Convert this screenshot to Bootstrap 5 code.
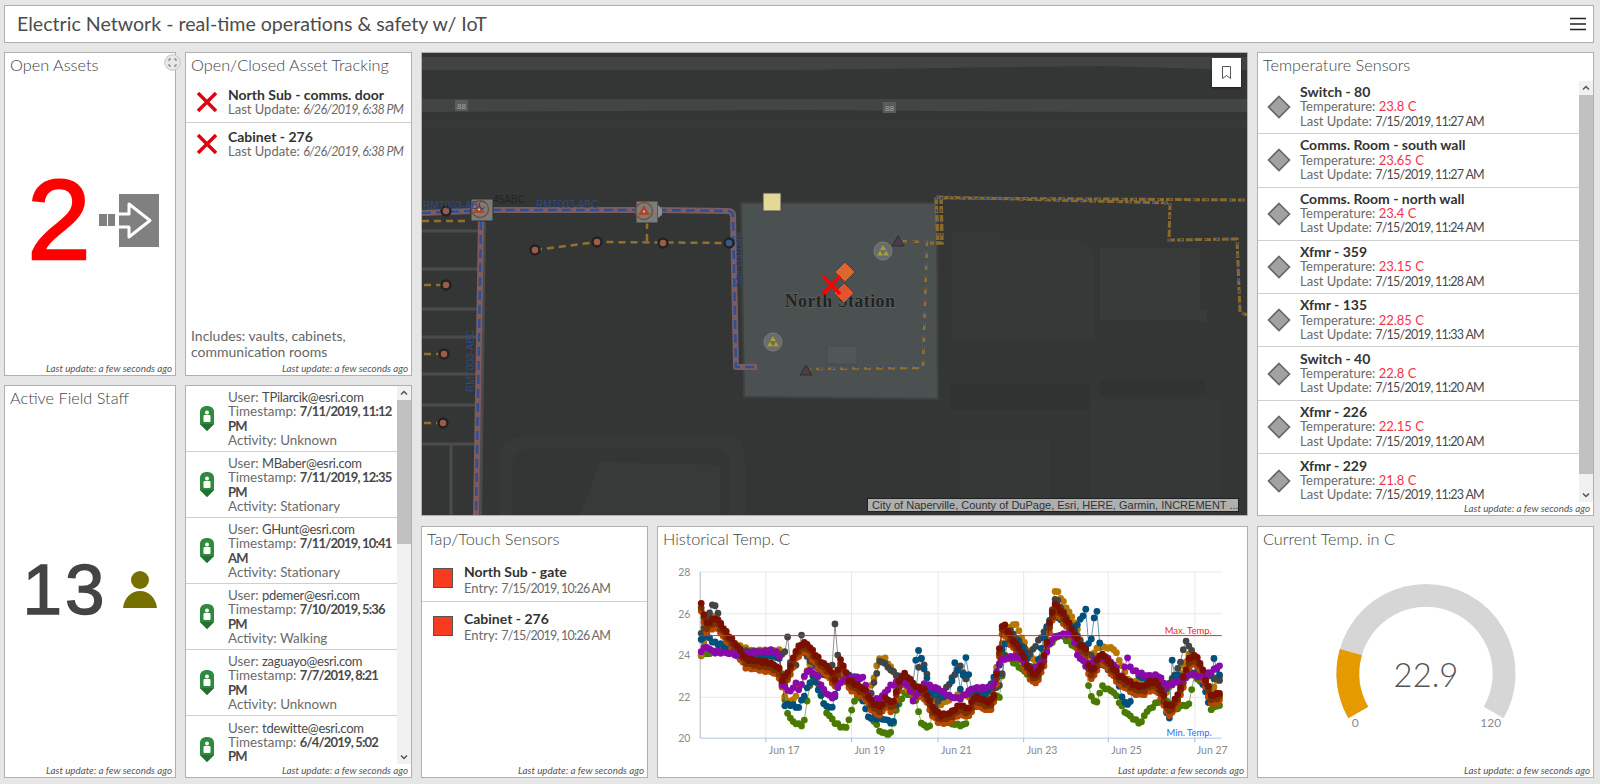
<!DOCTYPE html>
<html lang="en">

<head>
    <meta charset="UTF-8">
    <title>Electric Network - real-time operations &amp; safety w/ IoT</title>
    <link href="https://cdn.jsdelivr.net/npm/bootstrap@5.3.1/dist/css/bootstrap.min.css" rel="stylesheet">
    <style>
        html,
        body {
            height: 100%;
            overflow: hidden;
        }

        body {
            background: #e6e6e6;
            color: #4c4c4c;
            font-family: Lato, "Liberation Sans", sans-serif;
        }

        .dash-wrap {
            padding: 5px 6px 0 4px;
            gap: 9px;
        }

        .dash-head {
            height: 38px;
            padding: 0 7px 0 12px;
        }

        .dash-title {
            font-size: 19.6px;
            font-weight: 400;
        }

        .dash-main {
            height: 726px;
            gap: 9px;
        }

        .col-assets {
            width: 408px;
            gap: 9px;
        }

        .col-map {
            width: 827px;
            gap: 10px;
        }

        .col-temp {
            width: 337px;
            gap: 10px;
        }

        .row-top {
            height: 324px;
            gap: 9px;
        }

        .row-bottom {
            height: 393px;
            gap: 9px;
        }

        .row-tap {
            height: 252px;
            gap: 9px;
        }

        .w-narrow {
            width: 172px;
        }

        .w-list {
            width: 227px;
        }

        .panel-top {
            height: 464px;
        }

        .panel-gauge {
            height: 252px;
        }

        .card.dash-panel {
            --bs-card-border-color: #b0b0b0;
            --bs-card-border-radius: 0;
            --bs-card-inner-border-radius: 0;
            --bs-card-color: #4c4c4c;
            min-height: 0;
        }

        .panel-name {
            height: 28px;
            line-height: 24px;
            padding-left: 5px;
            font-size: 16.3px;
            font-weight: 300;
            color: #444;
            flex: none;
            white-space: nowrap;
        }

        .panel-foot {
            height: 13px;
            line-height: 12px;
            padding-right: 3px;
            font-size: 9.8px;
            font-style: italic;
            text-align: right;
            color: #555;
            flex: none;
        }

        .expand-btn {
            position: absolute;
            top: -4px;
            right: -6px;
            width: 17px;
            height: 17px;
            z-index: 2;
        }

        .assets-body {
            padding: 0 0 3px 6px;
        }

        .big-two {
            font-family: "Liberation Sans", sans-serif;
            font-size: 114px;
            line-height: 1;
            color: #f00;
            -webkit-text-stroke: 2.5px #f00;
        }

        .big-count {
            font-family: "Liberation Sans", sans-serif;
            font-size: 71px;
            line-height: 1;
            letter-spacing: 3px;
            color: #444;
            -webkit-text-stroke: 1.5px #444;
        }

        .asset-list,
        .sensor-list,
        .staff-list,
        .tap-list {
            --bs-list-group-border-color: #cfcfcf;
            --bs-list-group-bg: #fff;
            --bs-list-group-border-radius: 0;
        }

        .list-group-item.row-item {
            padding: 0;
            color: #6a6a6a;
            border-bottom: 1px solid #cfcfcf;
            flex: none;
        }

        .asset-list .row-item {
            height: 42px;
            font-size: 13px;
            line-height: 15px;
        }

        .tap-list .row-item {
            height: 47px;
            font-size: 13px;
            line-height: 16px;
        }

        .tap-text {
            padding-top: 4px;
        }

        .sensor-list .row-item {
            height: 53.3px;
            font-size: 13px;
            line-height: 14.4px;
        }

        .staff-list .row-item {
            height: 66px;
            font-size: 13.4px;
            line-height: 14.2px;
        }

        .item-ico {
            width: 42px;
            flex: none;
        }

        .item-name {
            font-size: 14px;
            font-weight: 700;
            color: #333;
        }

        .item-val {
            color: #4a4a4a;
        }

        .date-val {
            font-size: 12.5px;
            letter-spacing: -.75px;
        }

        .asset-list .date-val {
            letter-spacing: -.6px;
        }

        .mail-val {
            color: #4a4a4a;
            font-size: 13px;
            letter-spacing: -.3px;
        }

        .item-strong {
            font-size: 13px;
            font-weight: 700;
            letter-spacing: -.8px;
            color: #4a4a4a;
        }

        .hot-val {
            color: #f5314b;
        }

        .note-text {
            padding: 0 5px 2px;
            font-size: 14px;
            line-height: 16px;
            color: #666;
        }

        .fake-bar {
            width: 14px;
            background: #f1f1f1;
            flex: none;
        }

        .bar-btn {
            height: 14px;
            flex: none;
        }

        .thumb-staff {
            height: 144px;
            background: #c1c1c1;
            flex: none;
        }

        .thumb-temp {
            height: 379px;
            background: #c1c1c1;
            flex: none;
        }

        .map-svg {
            display: block;
            background: #343635;
        }

        .map-keep {
            position: absolute;
            top: 5px;
            right: 6px;
            width: 29px;
            height: 29px;
            background: #fff;
            box-shadow: 0 1px 2px rgba(0, 0, 0, .5);
        }

        .map-credit {
            position: absolute;
            right: 8px;
            bottom: 3px;
            width: 372px;
            height: 14px;
            line-height: 13px;
            padding-left: 4px;
            background: #aeb0b0;
            border: 1px solid #222;
            color: #333;
            font-family: "Liberation Sans", sans-serif;
            font-size: 11px;
            white-space: nowrap;
            overflow: hidden;
        }

        .chart-svg {
            display: block;
            flex: 1 1 auto;
            min-height: 0;
        }

        .ax-label {
            font-family: Lato, sans-serif;
            font-size: 10.5px;
            fill: #8a8a8a;
        }
    </style>
</head>

<body>
    <svg width="0" height="0" class="position-absolute">
        <symbol id="ico-x" viewBox="0 0 20 20">
            <path d="M1 1 19 19M19 1 1 19" stroke="#e0000f" stroke-width="3.4" fill="none" />
        </symbol>
        <symbol id="ico-pin" viewBox="0 0 14 25">
            <path d="M7 0C11 0 14 2 14 6V18L7 25 0 18V6C0 2 3 0 7 0Z" fill="#2f8a3e" />
            <path d="M0 18H14L7 25Z" fill="#237032" />
            <circle cx="7" cy="6.5" r="2" fill="#fff" />
            <rect x="3.5" y="9" width="7" height="7" rx="1" fill="#fff" />
        </symbol>
        <symbol id="ico-diamond" viewBox="0 0 24 24">
            <path d="M12 1.5 22.5 12 12 22.5 1.5 12Z" fill="#a2a2a2" stroke="#666" stroke-width="1.6" />
        </symbol>
        <symbol id="ico-up" viewBox="0 0 14 14">
            <path d="M4 8.5 7 5.5 10 8.5" fill="none" stroke="#555" stroke-width="1.5" />
        </symbol>
        <symbol id="ico-down" viewBox="0 0 14 14">
            <path d="M4 5.5 7 8.5 10 5.5" fill="none" stroke="#555" stroke-width="1.5" />
        </symbol>
    </svg>

    <div class="dash-wrap d-flex flex-column">
        <header class="dash-head card dash-panel flex-row align-items-center justify-content-between">
            <h1 class="dash-title m-0">Electric Network - real-time operations &amp; safety w/ IoT</h1>
            <svg width="16" height="14" viewBox="0 0 16 14">
                <path d="M0 1.5H16M0 7H16M0 12.5H16" stroke="#222" stroke-width="1.7" />
            </svg>
        </header>

        <div class="dash-main d-flex">
            <!-- assets and staff -->
            <div class="col-assets d-flex flex-column">
                <div class="row-top d-flex">
                    <section class="w-narrow card dash-panel">
                        <div class="expand-btn">
                            <svg width="17" height="17" viewBox="0 0 17 17">
                                <circle cx="8.5" cy="8.5" r="7.8" fill="#e8e8e8" stroke="#c4c4c4" />
                                <path d="M5 7V5H7M10 5H12V7M12 10V12H10M7 12H5V10" fill="none" stroke="#777" />
                            </svg>
                        </div>
                        <div class="panel-name">Open Assets</div>
                        <div class="assets-body flex-grow-1 d-flex align-items-center justify-content-center gap-2">
                            <span class="big-two">2</span>
                            <svg width="60" height="53" viewBox="98 195 60 53">
                                <rect x="118" y="195" width="40" height="53" fill="#808080" />
                                <rect x="98" y="215" width="8" height="12" fill="#808080" />
                                <rect x="107" y="215" width="7" height="12" fill="#808080" />
                                <path d="M118 215H128V205L149 221.500 128 238V228H118" fill="#808080" stroke="#fff"
                                    stroke-width="3" stroke-linejoin="round" />
                            </svg>
                        </div>
                        <div class="panel-foot">Last update: a few seconds ago</div>
                    </section>

                    <section class="w-list card dash-panel">
                        <div class="panel-name">Open/Closed Asset Tracking</div>
                        <ul class="asset-list list-group list-group-flush border-0">
                            <li class="list-group-item row-item d-flex align-items-center">
                                <div class="item-ico d-flex justify-content-center">
                                    <svg width="20" height="20"><use href="#ico-x" /></svg>
                                </div>
                                <div>
                                    <div class="item-name">North Sub - comms. door</div>
                                    <div>Last Update: <em class="date-val">6/26/2019, 6:38 PM</em></div>
                                </div>
                            </li>
                            <li class="list-group-item row-item d-flex align-items-center">
                                <div class="item-ico d-flex justify-content-center">
                                    <svg width="20" height="20"><use href="#ico-x" /></svg>
                                </div>
                                <div>
                                    <div class="item-name">Cabinet - 276</div>
                                    <div>Last Update: <em class="date-val">6/26/2019, 6:38 PM</em></div>
                                </div>
                            </li>
                        </ul>
                        <div class="flex-grow-1"></div>
                        <div class="note-text">Includes: vaults, cabinets,<br>communication rooms</div>
                        <div class="panel-foot">Last update: a few seconds ago</div>
                    </section>
                </div>

                <div class="row-bottom d-flex">
                    <section class="w-narrow card dash-panel">
                        <div class="panel-name">Active Field Staff</div>
                        <div class="flex-grow-1 d-flex align-items-center justify-content-center gap-3">
                            <span class="big-count">13</span>
                            <svg width="34" height="37" viewBox="0 0 34 37">
                                <circle cx="17" cy="9" r="9" fill="#757000" />
                                <path d="M0 37C1 27 8 20 17 20S33 27 34 37Z" fill="#757000" />
                            </svg>
                        </div>
                        <div class="panel-foot">Last update: a few seconds ago</div>
                    </section>

                    <section class="w-list card dash-panel">
                        <div class="d-flex flex-grow-1 overflow-hidden">
                            <ul class="staff-list list-group list-group-flush flex-grow-1 overflow-hidden flex-nowrap">
                                <li class="list-group-item row-item d-flex align-items-center">
                                    <div class="item-ico d-flex justify-content-center">
                                        <svg width="14" height="25"><use href="#ico-pin" /></svg>
                                    </div>
                                    <div>User: <span class="mail-val">TPilarcik@esri.com</span><br>Timestamp: <span class="item-strong">7/11/2019, 11:12<br>PM</span><br>Activity: Unknown</div>
                                </li>
                                <li class="list-group-item row-item d-flex align-items-center">
                                    <div class="item-ico d-flex justify-content-center">
                                        <svg width="14" height="25"><use href="#ico-pin" /></svg>
                                    </div>
                                    <div>User: <span class="mail-val">MBaber@esri.com</span><br>Timestamp: <span class="item-strong">7/11/2019, 12:35<br>PM</span><br>Activity: Stationary</div>
                                </li>
                                <li class="list-group-item row-item d-flex align-items-center">
                                    <div class="item-ico d-flex justify-content-center">
                                        <svg width="14" height="25"><use href="#ico-pin" /></svg>
                                    </div>
                                    <div>User: <span class="mail-val">GHunt@esri.com</span><br>Timestamp: <span class="item-strong">7/11/2019, 10:41<br>AM</span><br>Activity: Stationary</div>
                                </li>
                                <li class="list-group-item row-item d-flex align-items-center">
                                    <div class="item-ico d-flex justify-content-center">
                                        <svg width="14" height="25"><use href="#ico-pin" /></svg>
                                    </div>
                                    <div>User: <span class="mail-val">pdemer@esri.com</span><br>Timestamp: <span class="item-strong">7/10/2019, 5:36<br>PM</span><br>Activity: Walking</div>
                                </li>
                                <li class="list-group-item row-item d-flex align-items-center">
                                    <div class="item-ico d-flex justify-content-center">
                                        <svg width="14" height="25"><use href="#ico-pin" /></svg>
                                    </div>
                                    <div>User: <span class="mail-val">zaguayo@esri.com</span><br>Timestamp: <span class="item-strong">7/7/2019, 8:21<br>PM</span><br>Activity: Unknown</div>
                                </li>
                                <li class="list-group-item row-item d-flex align-items-center">
                                    <div class="item-ico d-flex justify-content-center">
                                        <svg width="14" height="25"><use href="#ico-pin" /></svg>
                                    </div>
                                    <div>User: <span class="mail-val">tdewitte@esri.com</span><br>Timestamp: <span class="item-strong">6/4/2019, 5:02<br>PM</span><br>Activity: Unknown</div>
                                </li>
                            </ul>
                            <div class="fake-bar d-flex flex-column">
                                <svg class="bar-btn" width="14" height="14"><use href="#ico-up" /></svg>
                                <div class="thumb-staff"></div>
                                <div class="flex-grow-1"></div>
                                <svg class="bar-btn" width="14" height="14"><use href="#ico-down" /></svg>
                            </div>
                        </div>
                        <div class="panel-foot">Last update: a few seconds ago</div>
                    </section>
                </div>
            </div>

            <!-- map, tap sensors and history -->
            <div class="col-map d-flex flex-column">
                <section class="panel-top card dash-panel overflow-hidden">
                    <svg class="map-svg" width="825" height="462" viewBox="422 53 825 462">
                        <!-- highway bands -->
                        <path d="M422 57H1247V70L1100 66 800 70H422Z" fill="#424443" />
                        <path d="M422 99H1247V112H1100L800 110 422 112Z" fill="#434544" />
                        <path d="M422 120H1247V128H422Z" fill="#373938" />
                        <rect x="455" y="100" width="13" height="11" fill="#5a5c5b" />
                        <text x="461.500" y="108.500" text-anchor="middle" font-size="8" fill="#a5a5a5" font-family="Liberation Sans">88</text>
                        <rect x="883" y="102" width="13" height="11" fill="#5a5c5b" />
                        <text x="889.500" y="110.500" text-anchor="middle" font-size="8" fill="#a5a5a5" font-family="Liberation Sans">88</text>

                        <!-- buildings and lots -->
                        <path d="M952 232H1000V240H1080Q1095 245 1095 262V340H952Z" fill="#373938" />
                        <path d="M1100 248H1200V310H1207V322H1200V320H1100Z" fill="#393b3a" />
                        <path d="M600 462 720 465V516H580Z" fill="#383a39" />
                        <path d="M500 450Q505 437 530 437H735Q745 440 745 460V516H730V465Q730 448 715 448H530Q515 450 512 465V516H500Z" fill="#373938" />
                        <path d="M960 440H1050V516H960Z" fill="#363837" />
                        <path d="M1090 400H1220V516H1090Z" fill="#363837" />
                        <path d="M950 385H1090V410H950Z" fill="#313332" />
                        <path d="M1100 380H1205V395H1100Z" fill="#313332" />

                        <!-- side streets -->
                        <g stroke="#4a4b4a" stroke-width="3" fill="none">
                            <path d="M422 231H480M422 269H480M422 309H478M422 337H478M422 374H478M422 405H478M422 444H478" />
                            <path d="M451 444V515" />
                            <path d="M484 222 480 515" stroke-width="4" />
                        </g>

                        <!-- substation -->
                        <path d="M741 203H937L938 399 744 397Z" fill="#4b5150" stroke="#3d4140" stroke-width="2" />
                        <rect x="827" y="346" width="30" height="18" fill="#515756" stroke="#474c4b" />

                        <!-- primary line -->
                        <g fill="none" stroke-linejoin="round">
                            <path d="M422 213 470 211M492 210H636M658 210 728 211Q733 211 733 216L736 367H757M481 221 476 515" stroke="#7c5c5e" stroke-width="6" />
                            <path d="M422 213 470 211M492 210H636M658 210 728 211Q733 211 733 216L736 367H757M481 221 476 515" stroke="#2d4f96" stroke-width="2.500" stroke-dasharray="9 5" />
                        </g>

                        <!-- secondary lines -->
                        <g fill="none" stroke="#94702f" stroke-width="2.500" stroke-dasharray="7 5">
                            <path d="M422 221H470" />
                            <path d="M535 250 597 242 729 243" />
                            <path d="M647 222V242" />
                            <path d="M424 285H445M424 354H443M424 423H442" />
                            <path d="M900 241 927 242 923 366Q923 368 920 368L810 369" />
                        </g>
                        <g fill="none">
                            <g stroke="#8a6a2c" stroke-width="3.500" stroke-dasharray="7 2">
                                <path d="M936 197 938 243M941 197 942 243 930 243" />
                                <path d="M936 197 1170 203M941 198 1247 200" stroke-width="3" />
                                <path d="M1170 203 1169 240 1237 239 1240 312 1247 315" stroke-width="3" />
                            </g>
                            <g stroke="#2d4b80" stroke-width="1.500" stroke-dasharray="3 9">
                                <path d="M936 197 938 243M941 197 942 243" />
                                <path d="M936 197 1170 203M941 198 1247 200" />
                                <path d="M1170 203 1169 240 1237 239 1240 312 1247 315" />
                                <path d="M900 241 927 242 923 366 810 369" />
                            </g>
                        </g>

                        <!-- poles -->
                        <g stroke="#222" stroke-width="2.500" fill="#9c5c48">
                            <circle cx="446" cy="211" r="4.500" />
                            <circle cx="535" cy="250" r="4.500" />
                            <circle cx="597" cy="242" r="4.500" />
                            <circle cx="663" cy="243" r="4.500" />
                            <circle cx="729" cy="243" r="4.500" fill="#345a8c" />
                            <circle cx="446" cy="285" r="4.500" />
                            <circle cx="444" cy="354" r="4.500" />
                            <circle cx="443" cy="423" r="4.500" />
                        </g>

                        <!-- switch boxes -->
                        <g>
                            <rect x="471" y="199" width="22" height="22" fill="#7c7c7c" stroke="#333" />
                            <circle cx="480" cy="209" r="8.500" fill="none" stroke="#7a5230" stroke-width="1.500" />
                            <path d="M479 203 485 213H473Z" fill="#a8492e" />
                            <circle cx="479" cy="209.500" r="1" fill="#ddd" />
                            <rect x="636" y="201" width="22" height="22" fill="#7c7c7c" stroke="#333" />
                            <path d="M658 205 662 209V215L658 218Z" fill="#8d8d8d" />
                            <circle cx="644" cy="211" r="8.500" fill="none" stroke="#7a5230" stroke-width="1.500" />
                            <path d="M644 205 650 215H638Z" fill="#a8492e" />
                            <circle cx="644" cy="211.500" r="1" fill="#ddd" />
                        </g>

                        <!-- labels on the lines -->
                        <g font-family="Liberation Sans" font-size="10" fill="#2f4a80">
                            <text x="423" y="209">RMT003-ABC</text>
                            <text x="536" y="208">RMT003-ABC</text>
                            <text transform="translate(474 392) rotate(-90)">RMT003-ABC</text>
                            <text transform="translate(736 232) rotate(90)" font-size="9">RMT003-ABC</text>
                            <text x="493" y="203" fill="#222">45ABC</text>
                        </g>

                        <!-- station symbols -->
                        <text x="840" y="307" text-anchor="middle" font-family="Liberation Serif" font-weight="700"
                            font-size="18" letter-spacing=".4" fill="#222" stroke="#6a6e6d" stroke-width=".8"
                            paint-order="stroke">North Station</text>
                        <rect x="763" y="193" width="18" height="18" fill="#e3d898" stroke="#444" />
                        <g fill="#6a6c6b" stroke="#7c7c7c">
                            <circle cx="883" cy="251" r="9" />
                            <circle cx="773" cy="342" r="9" />
                        </g>
                        <g fill="#a8a030">
                            <path d="M883 245 886 250H880ZM880 250.500 883 255.500H877ZM886 250.500 889 255.500H883Z" />
                            <path d="M773 336 776 341H770ZM770 341.500 773 346.500H767ZM776 341.500 779 346.500H773Z" />
                        </g>
                        <path d="M898 236 904 246H892Z" fill="#4a3d48" stroke="#2e2e2e" />
                        <path d="M806 365 812 375H800Z" fill="#4a3d48" stroke="#2e2e2e" />
                        <path d="M845 262 855 272 845 282 835 272Z" fill="#e0652f" stroke="#444" />
                        <path d="M844 283 854 293 844 303 834 293Z" fill="#e0552f" stroke="#444" />
                        <path d="M823 276 840 294M840 276 823 294" stroke="#f00" stroke-width="3.500" />
                    </svg>
                    <div class="map-keep d-flex align-items-center justify-content-center">
                        <svg width="9" height="13" viewBox="0 0 9 13">
                            <path d="M.5.5H8.500V12.500L4.500 9.500.5 12.500Z" fill="none" stroke="#555" />
                        </svg>
                    </div>
                    <div class="map-credit">City of Naperville, County of DuPage, Esri, HERE, Garmin, INCREMENT ...</div>
                </section>

                <div class="row-tap d-flex">
                    <section class="w-list card dash-panel">
                        <div class="panel-name">Tap/Touch Sensors</div>
                        <ul class="tap-list list-group list-group-flush border-0">
                            <li class="list-group-item row-item d-flex align-items-center">
                                <div class="item-ico d-flex justify-content-center">
                                    <svg width="20" height="20"><rect x=".5" y=".5" width="19" height="19" fill="#f53c1e" stroke="#555" /></svg>
                                </div>
                                <div class="tap-text">
                                    <div class="item-name">North Sub - gate</div>
                                    <div>Entry: <span class="date-val">7/15/2019, 10:26 AM</span></div>
                                </div>
                            </li>
                            <li class="list-group-item row-item d-flex align-items-center">
                                <div class="item-ico d-flex justify-content-center">
                                    <svg width="20" height="20"><rect x=".5" y=".5" width="19" height="19" fill="#f53c1e" stroke="#555" /></svg>
                                </div>
                                <div class="tap-text">
                                    <div class="item-name">Cabinet - 276</div>
                                    <div>Entry: <span class="date-val">7/15/2019, 10:26 AM</span></div>
                                </div>
                            </li>
                        </ul>
                        <div class="flex-grow-1"></div>
                        <div class="panel-foot">Last update: a few seconds ago</div>
                    </section>

                    <section class="flex-grow-1 card dash-panel">
                        <div class="panel-name">Historical Temp. C</div>
                        <svg id="tempChart" class="chart-svg" viewBox="658 555 589 210" width="589" height="210">
                            <g stroke="#e8e8ea" fill="none">
                                <path d="M699 572H1223M699 614H1223M699 656H1223M699 698H1223" />
                                <path d="M765 572V739M851 572V739M938 572V739M1024 572V739M1109 572V739M1196 572V739" />
                            </g>
                            <path d="M699 572V739" stroke="#b5b5b5" />
                            <g stroke="#b5b5b5">
                                <path d="M765 739V743M851 739V743M938 739V743M1024 739V743M1109 739V743M1196 739V743" />
                            </g>
                            <g class="ax-label" text-anchor="end">
                                <text x="689" y="576">28</text>
                                <text x="689" y="618">26</text>
                                <text x="689" y="660">24</text>
                                <text x="689" y="702">22</text>
                                <text x="689" y="743">20</text>
                            </g>
                            <g class="ax-label">
                                <text x="768" y="755">Jun 17</text>
                                <text x="854" y="755">Jun 19</text>
                                <text x="941" y="755">Jun 21</text>
                                <text x="1027" y="755">Jun 23</text>
                                <text x="1112" y="755">Jun 25</text>
                                <text x="1198" y="755">Jun 27</text>
                            </g>
                            <g id="chartDots"></g>
                            <path d="M699 636H1223" stroke="#e8282e" />
                            <path d="M699 739H1223" stroke="#a8c8f0" />
                            <text x="1213" y="634" text-anchor="end" font-size="9.500" fill="#f01e28" font-family="Lato">Max. Temp.</text>
                            <text x="1213" y="737" text-anchor="end" font-size="9.500" fill="#2f6cf0" font-family="Lato">Min. Temp.</text>
                        </svg>
                        <div class="panel-foot">Last update: a few seconds ago</div>
                    </section>
                </div>
            </div>

            <!-- sensors and gauge -->
            <div class="col-temp d-flex flex-column">
                <section class="panel-top card dash-panel">
                    <div class="panel-name">Temperature Sensors</div>
                    <div class="d-flex flex-grow-1 overflow-hidden">
                        <ul class="sensor-list list-group list-group-flush flex-grow-1 overflow-hidden flex-nowrap">
                            <li class="list-group-item row-item d-flex align-items-center">
                                <div class="item-ico d-flex justify-content-center">
                                    <svg width="24" height="24"><use href="#ico-diamond" /></svg>
                                </div>
                                <div><div class="item-name">Switch - 80</div>Temperature: <span class="hot-val">23.8 C</span><br>Last Update: <span class="item-val date-val">7/15/2019, 11:27 AM</span></div>
                            </li>
                            <li class="list-group-item row-item d-flex align-items-center">
                                <div class="item-ico d-flex justify-content-center">
                                    <svg width="24" height="24"><use href="#ico-diamond" /></svg>
                                </div>
                                <div><div class="item-name">Comms. Room - south wall</div>Temperature: <span class="hot-val">23.65 C</span><br>Last Update: <span class="item-val date-val">7/15/2019, 11:27 AM</span></div>
                            </li>
                            <li class="list-group-item row-item d-flex align-items-center">
                                <div class="item-ico d-flex justify-content-center">
                                    <svg width="24" height="24"><use href="#ico-diamond" /></svg>
                                </div>
                                <div><div class="item-name">Comms. Room - north wall</div>Temperature: <span class="hot-val">23.4 C</span><br>Last Update: <span class="item-val date-val">7/15/2019, 11:24 AM</span></div>
                            </li>
                            <li class="list-group-item row-item d-flex align-items-center">
                                <div class="item-ico d-flex justify-content-center">
                                    <svg width="24" height="24"><use href="#ico-diamond" /></svg>
                                </div>
                                <div><div class="item-name">Xfmr - 359</div>Temperature: <span class="hot-val">23.15 C</span><br>Last Update: <span class="item-val date-val">7/15/2019, 11:28 AM</span></div>
                            </li>
                            <li class="list-group-item row-item d-flex align-items-center">
                                <div class="item-ico d-flex justify-content-center">
                                    <svg width="24" height="24"><use href="#ico-diamond" /></svg>
                                </div>
                                <div><div class="item-name">Xfmr - 135</div>Temperature: <span class="hot-val">22.85 C</span><br>Last Update: <span class="item-val date-val">7/15/2019, 11:33 AM</span></div>
                            </li>
                            <li class="list-group-item row-item d-flex align-items-center">
                                <div class="item-ico d-flex justify-content-center">
                                    <svg width="24" height="24"><use href="#ico-diamond" /></svg>
                                </div>
                                <div><div class="item-name">Switch - 40</div>Temperature: <span class="hot-val">22.8 C</span><br>Last Update: <span class="item-val date-val">7/15/2019, 11:20 AM</span></div>
                            </li>
                            <li class="list-group-item row-item d-flex align-items-center">
                                <div class="item-ico d-flex justify-content-center">
                                    <svg width="24" height="24"><use href="#ico-diamond" /></svg>
                                </div>
                                <div><div class="item-name">Xfmr - 226</div>Temperature: <span class="hot-val">22.15 C</span><br>Last Update: <span class="item-val date-val">7/15/2019, 11:20 AM</span></div>
                            </li>
                            <li class="list-group-item row-item d-flex align-items-center border-0">
                                <div class="item-ico d-flex justify-content-center">
                                    <svg width="24" height="24"><use href="#ico-diamond" /></svg>
                                </div>
                                <div><div class="item-name">Xfmr - 229</div>Temperature: <span class="hot-val">21.8 C</span><br>Last Update: <span class="item-val date-val">7/15/2019, 11:23 AM</span></div>
                            </li>
                        </ul>
                        <div class="fake-bar d-flex flex-column">
                            <svg class="bar-btn" width="14" height="14"><use href="#ico-up" /></svg>
                            <div class="thumb-temp"></div>
                            <div class="flex-grow-1"></div>
                            <svg class="bar-btn" width="14" height="14"><use href="#ico-down" /></svg>
                        </div>
                    </div>
                    <div class="panel-foot">Last update: a few seconds ago</div>
                </section>

                <section class="panel-gauge card dash-panel">
                    <div class="panel-name">Current Temp. in C</div>
                    <svg class="chart-svg" viewBox="1258 555 335 210" width="335" height="210">
                        <path id="gaugeBack" fill="none" stroke="#d6d6d6" stroke-width="23" />
                        <path id="gaugeFill" fill="none" stroke="#e59a00" stroke-width="23" />
                        <text x="1426" y="688" text-anchor="middle" font-family="Lato" font-weight="300" font-size="33" fill="#555">22.9</text>
                        <text x="1355" y="728" text-anchor="middle" class="ax-label" style="font-size:12px">0</text>
                        <text x="1491" y="728" text-anchor="middle" class="ax-label" style="font-size:12px">120</text>
                    </svg>
                    <div class="panel-foot">Last update: a few seconds ago</div>
                </section>
            </div>
        </div>
    </div>

    <script src="https://cdn.jsdelivr.net/npm/bootstrap@5.3.1/dist/js/bootstrap.bundle.min.js"></script>
    <script>
        // gauge arcs, 240 degrees from lower left
        function arcPath(cx, cy, r, from, to) {
            const p = function (deg) {
                const a = (deg - 90) * Math.PI / 180;
                return (cx + r * Math.cos(a)).toFixed(1) + " " + (cy + r * Math.sin(a)).toFixed(1);
            };
            return "M" + p(from) + "A" + r + " " + r + " 0 " + (to - from > 180 ? 1 : 0) + " 1 " + p(to);
        }
        document.getElementById("gaugeBack").setAttribute("d", arcPath(1426, 674, 78.5, -120, 120));
        document.getElementById("gaugeFill").setAttribute("d", arcPath(1426, 674, 78.5, -120, -120 + 22.9 / 120 * 240));

        // chart series as [pixel x, temperature] knots
        const maroon = [[700, 26.5], [705, 25.5], [715, 25.8], [725, 25.1], [735, 24.5], [745, 23.8], [770, 23.6], [778, 23.4], [781, 22.8], [785, 23], [790, 23.5], [795, 24.2], [800, 24.5], [805, 24.6], [812, 24.2], [820, 23.7], [828, 23.4], [835, 22.8], [840, 23.8], [845, 23.2], [848, 22.8], [855, 22.6], [865, 22.3], [872, 21.7], [880, 21.5], [886, 22], [892, 21.6], [900, 22.9], [905, 23.1], [915, 22.5], [925, 22.3], [932, 21.5], [940, 21.1], [950, 21.2], [960, 21.6], [968, 21.4], [975, 22], [990, 21.7], [995, 22.2], [1000, 24.5], [1003, 25.6], [1010, 25], [1015, 24.6], [1020, 24.3], [1030, 23.3], [1035, 23], [1040, 23.3], [1045, 24], [1050, 25.5], [1055, 26.5], [1062, 26.1], [1070, 25.5], [1075, 25], [1082, 24.4], [1087, 24.3], [1090, 23.2], [1095, 23.4], [1100, 24], [1105, 24], [1112, 23.5], [1120, 23], [1130, 22.7], [1138, 22.5], [1145, 22.5], [1150, 22.7], [1158, 22.7], [1165, 22], [1168, 21.6], [1172, 21.5], [1180, 22.2], [1187, 23.3], [1190, 23.8], [1195, 24], [1200, 23.8], [1207, 22.8], [1213, 22], [1221, 22.2]];
        const purple = [[700, 24.2], [705, 24.4], [712, 24.15], [725, 24.1], [740, 24], [750, 24.1], [770, 24.2], [778, 24.1], [781, 22.6], [790, 22.2], [795, 22.7], [797, 22.2], [807, 23.3], [817, 23], [823, 22.3], [832, 21.9], [840, 22.7], [850, 22.9], [863, 22.9], [870, 21.8], [880, 21.9], [890, 22.5], [897, 22.7], [907, 22.6], [913, 21.8], [923, 22.6], [937, 22.4], [950, 22], [960, 21.9], [973, 22.4], [983, 22.4], [993, 22.5], [1000, 23.7], [1010, 23.9], [1020, 23.9], [1033, 23.2], [1043, 23.7], [1053, 24.8], [1063, 25], [1073, 25], [1078, 24], [1087, 23.5], [1097, 23.8], [1107, 23.9], [1117, 23.4], [1122, 22.8], [1128, 23.9], [1132, 23.3], [1147, 23], [1160, 23], [1167, 22.5], [1183, 22.8], [1193, 23.1], [1203, 22.9], [1213, 23.2], [1221, 23.5]];
        const green = [[700, 24], [720, 24.2], [780, 23.9], [783, 22], [788, 21], [795, 20.7], [803, 20.6], [808, 22.4], [815, 23], [825, 21.3], [835, 20.7], [845, 20.45], [850, 21.1], [855, 22], [868, 21.9], [873, 20.9], [880, 20.3], [890, 20.15], [897, 21.5], [905, 22.2], [915, 21.9], [922, 20.6], [930, 20.55], [936, 22], [942, 20.9], [950, 20.7], [965, 20.6], [968, 21], [980, 22], [1000, 22], [1005, 24], [1030, 23], [1050, 24.5], [1060, 25], [1085, 24], [1090, 22.2], [1097, 21.6], [1102, 22.5], [1115, 22.2], [1125, 21.3], [1135, 20.9], [1142, 20.7], [1146, 21.2], [1165, 22], [1175, 21.3], [1182, 21.55], [1190, 21.6], [1195, 23], [1207, 22.5], [1212, 21.4], [1221, 21.6]];
        const gold = [[700, 24], [705, 25.1], [712, 25.9], [720, 25], [735, 24.5], [750, 24.2], [780, 24.2], [782, 22.1], [790, 21.6], [800, 22.5], [812, 23.9], [825, 23], [840, 22.7], [850, 22.9], [865, 22], [872, 22.6], [878, 23.8], [885, 23.8], [900, 22.7], [915, 22], [925, 22.1], [935, 21.5], [960, 22.1], [970, 22], [990, 22], [995, 23], [1003, 24.7], [1015, 25.6], [1030, 24], [1040, 23.5], [1050, 25.3], [1056, 27.2], [1062, 26.7], [1075, 25.6], [1085, 24.2], [1090, 23.9], [1100, 24.4], [1115, 24.3], [1130, 22.7], [1150, 22.7], [1165, 22.1], [1180, 23], [1190, 24], [1205, 23], [1212, 22.2], [1221, 23]];
        const blue = [[700, 24.7], [705, 25], [712, 24.6], [720, 24.5], [735, 24], [750, 23.9], [770, 24], [780, 23.8], [783, 21.6], [792, 21.6], [797, 21.4], [803, 22], [812, 23], [825, 21.5], [832, 21.5], [840, 23], [845, 23.1], [855, 22.9], [868, 21], [885, 20.9], [893, 20.7], [900, 22.8], [913, 22.6], [917, 24.4], [920, 24], [925, 23.2], [930, 22.2], [945, 22], [950, 22.1], [956, 24], [960, 22.2], [967, 24.1], [970, 22.4], [985, 22], [1000, 23.5], [1003, 24.5], [1020, 24.6], [1035, 23], [1045, 25], [1052, 26], [1075, 25.2], [1087, 26.2], [1090, 24], [1097, 26.6], [1099, 25], [1102, 24], [1115, 23.2], [1125, 21.7], [1130, 21.6], [1140, 23], [1165, 22.5], [1168, 21], [1171, 21], [1172, 24], [1176, 23], [1185, 23], [1200, 23.2], [1208, 22], [1212, 21.4], [1214, 24.1], [1218, 23.3], [1221, 23]];
        const gray = [[700, 25], [708, 26], [712, 26.5], [716, 26.2], [722, 25], [740, 24.2], [780, 24], [785, 24.2], [787, 24.9], [790, 23.5], [795, 23.5], [801, 25], [804, 24], [825, 23], [832, 23.5], [834, 25.5], [836, 25.5], [838, 23], [850, 22.8], [870, 22], [880, 23.8], [890, 23.3], [905, 22.7], [915, 22], [920, 24], [925, 23.4], [935, 21.5], [960, 23.5], [965, 23], [970, 22], [1000, 22.5], [1010, 25.2], [1030, 24], [1050, 25.5], [1056, 26.8], [1070, 25.5], [1090, 24], [1130, 22.6], [1165, 22.2], [1180, 23.4], [1187, 24.7], [1205, 23.1], [1221, 22.8]];

        const shift = function (keys, d) {
            return keys.map(function (k) { return [k[0], k[1] + d]; });
        };

        const series = [
            { color: "#4a7a00", keys: green },
            { color: "#b87800", keys: gold },
            { color: "#444444", keys: gray },
            { color: "#00507d", keys: blue },
            { color: "#b84800", keys: shift(maroon, -0.4) },
            { color: "#7a3200", keys: shift(maroon, -0.2) },
            { color: "#8a0aa8", keys: purple },
            { color: "#7a1000", keys: maroon }
        ];

        function tempAt(keys, x) {
            for (let i = 1; i < keys.length; i++) {
                if (x <= keys[i][0]) {
                    const t = (x - keys[i - 1][0]) / (keys[i][0] - keys[i - 1][0]);
                    return keys[i - 1][1] + t * (keys[i][1] - keys[i - 1][1]);
                }
            }
            return keys[keys.length - 1][1];
        }

        let chartHtml = "";
        series.forEach(function (s, n) {
            let line = "";
            let dots = "";
            for (let x = 700; x <= 1221; x += 2.8) {
                const y = 739 - (tempAt(s.keys, x) + Math.sin(x * 1.3 + n) * 0.05 - 20) * 20.9;
                line += x.toFixed(1) + "," + y.toFixed(1) + " ";
                dots += '<circle cx="' + x.toFixed(1) + '" cy="' + y.toFixed(1) + '" r="3.4"/>';
            }
            chartHtml += '<polyline points="' + line + '" fill="none" stroke="' + s.color + '" opacity=".6"/>';
            chartHtml += '<g fill="' + s.color + '">' + dots + "</g>";
        });
        document.getElementById("chartDots").innerHTML = chartHtml;
    </script>
</body>

</html>
